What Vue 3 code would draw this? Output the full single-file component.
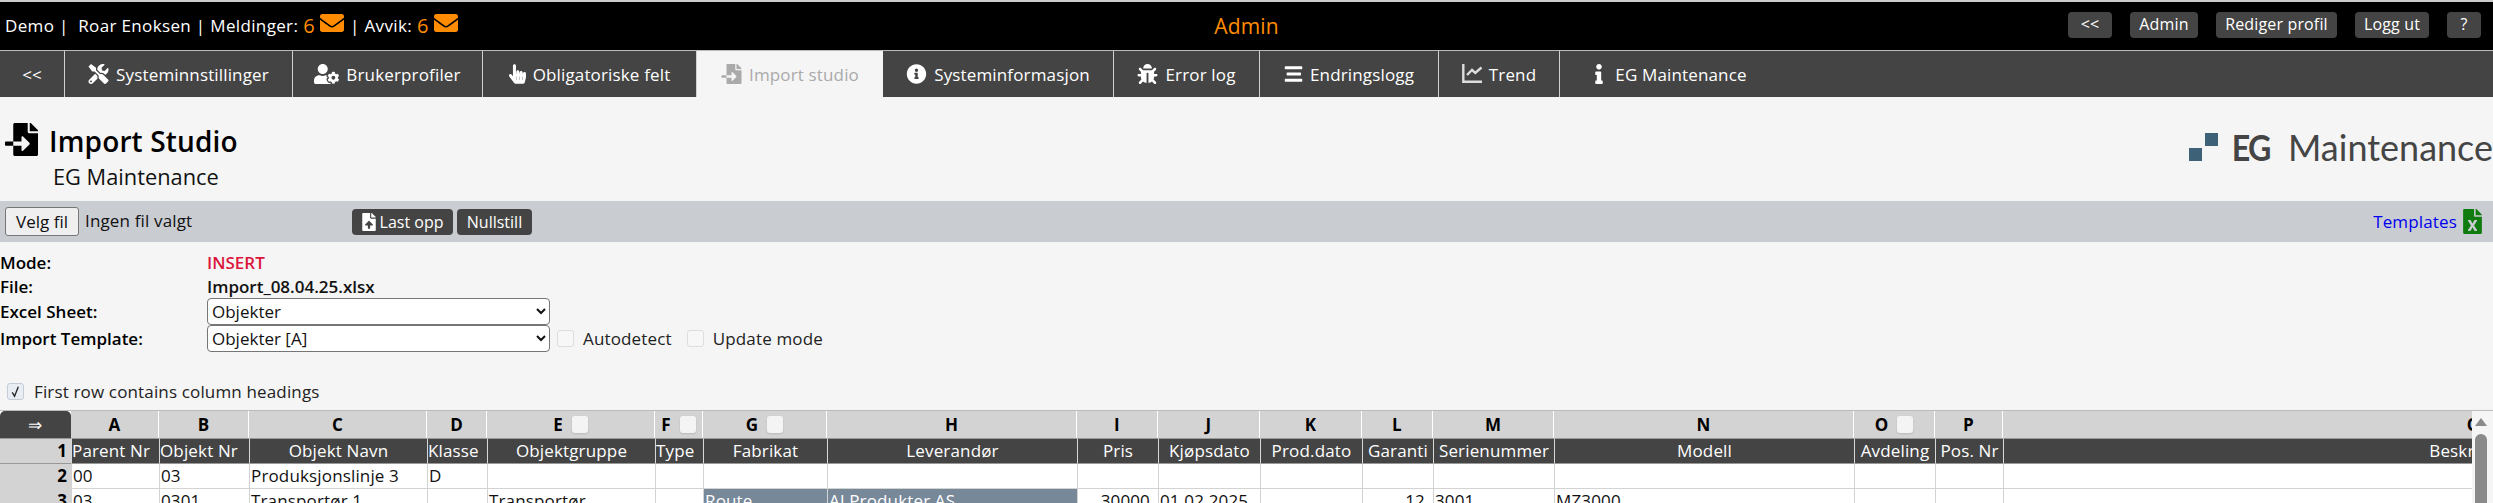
<script setup>
const icons = {
  envelope: { vb: '0 0 512 512', d: 'M502.3 190.8c3.9-3.1 9.7-.2 9.7 4.7V400c0 26.5-21.5 48-48 48H48c-26.5 0-48-21.5-48-48V195.6c0-5 5.7-7.8 9.7-4.7 22.4 17.4 52.1 39.5 154.1 113.6 21.1 15.4 56.7 47.8 92.2 47.6 35.7.3 72-32.8 92.3-47.6 102-74.1 131.6-96.3 154-113.7zM256 320c23.2.4 56.6-29.2 73.4-41.4 132.7-96.3 142.8-104.7 173.4-128.7 5.8-4.5 9.2-11.5 9.2-18.9v-19c0-26.5-21.5-48-48-48H48C21.5 64 0 85.5 0 112v19c0 7.4 3.4 14.3 9.2 18.9 30.6 23.9 40.7 32.4 173.4 128.7 16.8 12.2 50.2 41.8 73.4 41.4z' },
  tools: { vb: '0 0 512 512', d: 'M501.1 395.7L384 278.6c-23.1-23.1-57.6-27.6-85.4-13.9L192 158.1V96L64 0 0 64l96 128h62.1l106.6 106.6c-13.6 27.8-9.2 62.3 13.9 85.4l117.1 117.1c14.6 14.6 38.2 14.6 52.7 0l52.7-52.7c14.5-14.6 14.5-38.2 0-52.7zM331.7 225c28.3 0 54.9 11 74.9 31l19.4 19.4c15.8-6.9 30.8-16.5 43.8-29.5 37.1-37.1 49.7-89.3 37.9-136.7-2.2-9-13.5-12.1-20.1-5.5l-74.4 74.4-67.9-11.3L334 98.9l74.4-74.4c6.6-6.6 3.4-17.9-5.7-20.2-47.4-11.7-99.6.9-136.6 37.9-28.5 28.5-41.9 66.1-41.2 103.6l82.1 82.1c8.1-1.9 16.5-2.9 24.7-2.9zm-103.9 82l-56.7-56.7L18.7 402.8c-25 25-25 65.5 0 90.5s65.5 25 90.5 0l123.6-123.6c-7.6-19.9-9.9-41.6-5-62.7zM64 472c-13.2 0-24-10.8-24-24 0-13.3 10.7-24 24-24s24 10.7 24 24c0 13.2-10.7 24-24 24z' },
  usercog: { vb: '0 0 640 512', d: 'M610.5 373.3c2.6-14.1 2.6-28.5 0-42.6l25.8-14.9c3-1.7 4.3-5.2 3.3-8.5-6.7-21.6-18.2-41.2-33.2-57.4-2.3-2.5-6-3.1-9-1.4l-25.8 14.9c-10.9-9.3-23.4-16.5-36.9-21.3v-29.8c0-3.4-2.4-6.4-5.7-7.1-22.3-5-45-4.8-66.2 0-3.3.7-5.7 3.7-5.7 7.1v29.8c-13.5 4.8-26 12-36.9 21.3l-25.8-14.9c-2.9-1.7-6.7-1.1-9 1.4-15 16.2-26.5 35.8-33.2 57.4-1 3.3.4 6.8 3.3 8.5l25.8 14.9c-2.6 14.1-2.6 28.5 0 42.6l-25.8 14.9c-3 1.7-4.3 5.2-3.3 8.5 6.7 21.6 18.2 41.1 33.2 57.4 2.3 2.5 6 3.1 9 1.4l25.8-14.9c10.9 9.3 23.4 16.5 36.9 21.3v29.8c0 3.4 2.4 6.4 5.7 7.1 22.3 5 45 4.8 66.2 0 3.3-.7 5.7-3.7 5.7-7.1v-29.8c13.5-4.8 26-12 36.9-21.3l25.8 14.9c2.9 1.7 6.7 1.1 9-1.4 15-16.2 26.5-35.8 33.2-57.4 1-3.3-.4-6.8-3.3-8.5l-25.8-14.9zM496 400.5c-26.8 0-48.5-21.8-48.5-48.5s21.8-48.5 48.5-48.5 48.5 21.8 48.5 48.5-21.7 48.5-48.5 48.5zM224 256c70.7 0 128-57.3 128-128S294.7 0 224 0 96 57.3 96 128s57.3 128 128 128zm201.2 226.5c-2.3-1.2-4.6-2.6-6.8-3.9l-7.9 4.6c-6 3.4-12.8 5.3-19.6 5.3-10.9 0-21.4-4.6-28.9-12.6-18.3-19.8-32.3-43.9-40.2-69.6-5.5-17.7 1.9-36.4 17.9-45.7l7.9-4.6c-.1-2.6-.1-5.2 0-7.8l-7.9-4.6c-16-9.2-23.4-28-17.9-45.7.9-2.9 2.2-5.8 3.2-8.7-3.8-.3-7.5-1.2-11.4-1.2h-16.7c-22.2 10.2-46.9 16-72.9 16s-50.6-5.8-72.9-16h-16.7C60.2 288 0 348.2 0 422.4V464c0 26.5 21.5 48 48 48h352c10.1 0 19.5-3.2 27.2-8.5-1.2-3.8-2-7.7-2-11.8v-9.2z' },
  hand: { vb: '0 0 448 512', d: 'M448 240v96c0 3.084-.356 6.159-1.063 9.162l-32 136C410.686 499.23 394.562 512 376 512H168a40.004 40.004 0 0 1-32.35-16.473l-127.997-176c-12.993-17.866-9.043-42.883 8.822-55.876 17.867-12.994 42.884-9.043 55.877 8.823L104 315.992V40c0-22.091 17.908-40 40-40s40 17.909 40 40v200h8v-40c0-22.091 17.908-40 40-40s40 17.909 40 40v40h8v-24c0-22.091 17.908-40 40-40s40 17.909 40 40v24h8c0-22.091 17.908-40 40-40s40 17.909 40 40zm-256 80h-8v96h8v-96zm88 0h-8v96h8v-96zm88 0h-8v96h8v-96z' },
  fileimport: { vb: '0 0 512 512', d: 'M16 288c-8.8 0-16 7.2-16 16v32c0 8.8 7.2 16 16 16h112v-64zm489-183L407.1 7c-4.5-4.5-10.6-7-17-7H384v128h128v-6.1c0-6.3-2.5-12.4-7-16.9zm-153 31V0H152c-13.3 0-24 10.7-24 24v264h128v-65.2c0-14.3 17.3-21.4 27.4-11.3L379 308c6.6 6.7 6.6 17.4 0 24l-95.7 96.4c-10.1 10.1-27.4 3-27.4-11.3V352H128v136c0 13.3 10.7 24 24 24h336c13.3 0 24-10.7 24-24V160H376c-13.2 0-24-10.8-24-24z' },
  infocircle: { vb: '0 0 512 512', d: 'M256 8C119.043 8 8 119.083 8 256c0 136.997 111.043 248 248 248s248-111.003 248-248C504 119.083 392.957 8 256 8zm0 110c23.196 0 42 18.804 42 42s-18.804 42-42 42-42-18.804-42-42 18.804-42 42-42zm56 254c0 6.627-5.373 12-12 12h-88c-6.627 0-12-5.373-12-12v-24c0-6.627 5.373-12 12-12h12v-64h-12c-6.627 0-12-5.373-12-12v-24c0-6.627 5.373-12 12-12h64c6.627 0 12 5.373 12 12v100h12c6.627 0 12 5.373 12 12v24z' },
  bug: { vb: '0 0 512 512', d: 'M511.988 288.9c-.478 17.43-15.217 31.1-32.653 31.1H424v16c0 21.864-4.882 42.584-13.6 61.145l60.228 60.228c12.496 12.497 12.496 32.758 0 45.255-12.498 12.497-32.759 12.496-45.256 0l-54.736-54.736C345.886 467.965 314.351 480 280 480V236c0-6.627-5.373-12-12-12h-24c-6.627 0-12 5.373-12 12v244c-34.351 0-65.886-12.035-90.636-32.108l-54.736 54.736c-12.498 12.497-32.759 12.496-45.256 0-12.496-12.497-12.496-32.758 0-45.255l60.228-60.228C92.882 378.584 88 357.864 88 336v-16H32.666C15.23 320 .491 306.33.013 288.9-.484 270.816 14.028 256 32 256h56v-58.745l-46.628-46.628c-12.496-12.497-12.496-32.758 0-45.255 12.498-12.497 32.758-12.497 45.256 0L141.255 160h229.489l54.627-54.627c12.498-12.497 32.758-12.497 45.256 0 12.496 12.497 12.496 32.758 0 45.255L424 197.255V256h56c17.972 0 32.484 14.816 31.988 32.9zM257 0c-61.856 0-112 50.144-112 112h224C369 50.144 318.856 0 257 0z' },
  bars: { vb: '0 0 448 512', d: 'M16 132h416c8.837 0 16-7.163 16-16V76c0-8.837-7.163-16-16-16H16C7.163 60 0 67.163 0 76v40c0 8.837 7.163 16 16 16zm48 160h336c8.837 0 16-7.163 16-16v-40c0-8.837-7.163-16-16-16H64c-8.837 0-16 7.163-16 16v40c0 8.837 7.163 16 16 16zm-48 160h416c8.837 0 16-7.163 16-16v-40c0-8.837-7.163-16-16-16H16c-8.837 0-16 7.163-16 16v40c0 8.837 7.163 16 16 16z' },
  info: { vb: '0 0 192 512', d: 'M20 424.229h20V279.771H20c-11.046 0-20-8.954-20-20V212c0-11.046 8.954-20 20-20h112c11.046 0 20 8.954 20 20v212.229h20c11.046 0 20 8.954 20 20V492c0 11.046-8.954 20-20 20H20c-11.046 0-20-8.954-20-20v-47.771c0-11.046 8.954-20 20-20zM96 0C56.235 0 24 32.235 24 72s32.235 72 72 72 72-32.235 72-72S135.764 0 96 0z' },
  upload: { vb: '0 0 384 512', d: 'M224 136V0H24C10.7 0 0 10.7 0 24v464c0 13.3 10.7 24 24 24h336c13.3 0 24-10.7 24-24V160H248c-13.2 0-24-10.8-24-24zm65.18 216.01H224v80c0 8.84-7.16 16-16 16h-32c-8.84 0-16-7.16-16-16v-80H94.82c-14.28 0-21.41-17.29-11.27-27.36l96.42-95.7c6.65-6.61 17.39-6.61 24.04 0l96.42 95.7c10.15 10.07 3.03 27.36-11.25 27.36zM377 105L279.1 7c-4.5-4.5-10.6-7-17-7H256v128h128v-6.1c0-6.3-2.5-12.4-7-16.9z' },
  excel: { vb: '0 0 384 512', d: 'M224 136V0H24C10.7 0 0 10.7 0 24v464c0 13.3 10.7 24 24 24h336c13.3 0 24-10.7 24-24V160H248c-13.2 0-24-10.8-24-24zm60.1 106.5L224 336l60.1 93.5c5.1 8-.6 18.5-10.1 18.5h-34.9c-4.4 0-8.5-2.4-10.6-6.3C208.9 405.5 192 373 192 373c-6.1 14.1-9.5 19.1-36.6 68.8-2.1 3.9-6.1 6.3-10.5 6.3H110c-9.5 0-15.2-10.5-10.1-18.5l60.3-93.5-60.3-93.5c-5.2-8 .6-18.5 10.1-18.5h34.8c4.4 0 8.5 2.4 10.6 6.3 26.1 48.8 20 33.6 36.6 68.5 0 0 6.1-11.7 36.6-68.5 2.1-3.9 6.2-6.3 10.6-6.3H274c9.5-.1 15.2 10.4 10.1 18.4zM384 121.9v6.1H256V0h6.1c6.4 0 12.5 2.5 17 7l97.9 98c4.5 4.5 7 10.6 7 16.9z' }
}

const topButtons = [
  { label: '<<', w: 44 },
  { label: 'Admin', w: 68 },
  { label: 'Rediger profil', w: 121 },
  { label: 'Logg ut', w: 74 },
  { label: '?', w: 34 }
]

const tabs = [
  { label: 'Systeminnstillinger', icon: 'tools', w: 228, iw: 21 },
  { label: 'Brukerprofiler', icon: 'usercog', w: 190, iw: 25 },
  { label: 'Obligatoriske felt', icon: 'hand', w: 214, iw: 17 },
  { label: 'Import studio', icon: 'fileimport', w: 186, iw: 21, active: true },
  { label: 'Systeminformasjon', icon: 'infocircle', w: 231, iw: 21 },
  { label: 'Error log', icon: 'bug', w: 146, iw: 21 },
  { label: 'Endringslogg', icon: 'bars', w: 179, iw: 19 },
  { label: 'Trend', icon: 'chart', w: 121, iw: 20 },
  { label: 'EG Maintenance', icon: 'info', w: 222, iw: 8, wide: true }
]

const columns = [
  { letter: 'A', w: 88, head: 'Parent Nr' },
  { letter: 'B', w: 90, head: 'Objekt Nr' },
  { letter: 'C', w: 178, head: 'Objekt Navn', center: true },
  { letter: 'D', w: 60, head: 'Klasse' },
  { letter: 'E', w: 168, head: 'Objektgruppe', center: true, box: true },
  { letter: 'F', w: 48, head: 'Type', box: true },
  { letter: 'G', w: 124, head: 'Fabrikat', center: true, box: true },
  { letter: 'H', w: 250, head: 'Leverandør', center: true },
  { letter: 'I', w: 81, head: 'Pris', center: true, right: true },
  { letter: 'J', w: 102, head: 'Kjøpsdato', center: true },
  { letter: 'K', w: 102, head: 'Prod.dato', center: true },
  { letter: 'L', w: 71, head: 'Garanti', center: true, right: true },
  { letter: 'M', w: 121, head: 'Serienummer', center: true },
  { letter: 'N', w: 300, head: 'Modell', center: true },
  { letter: 'O', w: 81, head: 'Avdeling', center: true, box: true },
  { letter: 'P', w: 68, head: 'Pos. Nr', center: true },
  { letter: 'Q', w: 942, head: 'Beskrivelse', center: true }
]

const rows = [
  { n: 2, cells: ['00', '03', 'Produksjonslinje 3', 'D', '', '', '', '', '', '', '', '', '', '', '', '', ''] },
  { n: 3, cells: ['03', '0301', 'Transportør 1', '', 'Transportør', '', 'Route', 'AJ Produkter AS', '30000', '01.02.2025', '', '12', '3001', 'MZ3000', '', '', ''] }
]
</script>

<template>
  <div class="page">
    <header class="topbar">
      <div class="who">
        <span>Demo |&nbsp; Roar Enoksen | Meldinger:</span>
        <span class="count">6</span>
        <svg class="env" :viewBox="icons.envelope.vb"><path :d="icons.envelope.d" /></svg>
        <span>| Avvik:</span>
        <span class="count">6</span>
        <svg class="env" :viewBox="icons.envelope.vb"><path :d="icons.envelope.d" /></svg>
      </div>
      <div class="area">Admin</div>
      <div class="topbtns">
        <a v-for="b in topButtons" :key="b.label" class="topbtn" :style="{ width: b.w + 'px' }">{{ b.label }}</a>
      </div>
    </header>

    <nav class="tabs">
      <a class="tab back">&lt;&lt;</a>
      <a v-for="t in tabs" :key="t.label" class="tab" :class="{ active: t.active }" :style="{ width: t.w + 'px' }">
        <svg v-if="t.icon === 'chart'" class="ticon chart" :style="{ width: t.iw + 'px' }" viewBox="0 0 20 20">
          <path d="M1.3 0v17.7h18.7" stroke-width="2.4" />
          <path d="M5 11l5-5 3.3 3 6.2-5.5" stroke-width="2.4" />
        </svg>
        <svg v-else class="ticon" :style="{ width: t.iw + 'px' }" :viewBox="icons[t.icon].vb"><path :d="icons[t.icon].d" /></svg>
        <span :class="{ widegap: t.wide }">{{ t.label }}</span>
      </a>
    </nav>

    <section class="heading">
      <div class="titles">
        <h1 class="title">
          <svg class="ticon2" :viewBox="icons.fileimport.vb"><path :d="icons.fileimport.d" /></svg>
          <span class="titletext">Import Studio</span>
        </h1>
        <div class="sub">EG Maintenance</div>
      </div>
      <div class="logo">
        <span class="squares"><i class="sq s1"></i><i class="sq s2"></i></span>
        <span class="eg">EG</span>
        <span class="maint">Maintenance</span>
      </div>
    </section>

    <section class="toolbar">
      <button class="choose" type="button">Velg fil</button>
      <span class="nofile">Ingen fil valgt</span>
      <div class="actions">
        <button class="act lastopp" type="button">
          <svg class="upicon" :viewBox="icons.upload.vb"><path :d="icons.upload.d" /></svg>Last opp
        </button>
        <button class="act nullstill" type="button">Nullstill</button>
      </div>
      <a class="templates">Templates
        <svg class="xl" :viewBox="icons.excel.vb"><path :d="icons.excel.d" /></svg>
      </a>
    </section>

    <section class="form">
      <div class="frow r1"><label>Mode:</label><strong class="insert">INSERT</strong></div>
      <div class="frow r2"><label>File:</label><strong>Import_08.04.25.xlsx</strong></div>
      <div class="frow r3"><label>Excel Sheet:</label><select><option>Objekter</option></select></div>
      <div class="frow r4">
        <label>Import Template:</label><select><option>Objekter [A]</option></select>
        <span class="box formbox b1"></span><span class="cbtext">Autodetect</span>
        <span class="box formbox b2"></span><span class="cbtext">Update mode</span>
      </div>
    </section>

    <div class="firstrow">
      <span class="box formbox checked">
        <svg viewBox="0 0 16 16" fill="none" stroke="#222" stroke-width="1.4"><path d="M4.5 9l2.5 4 4-10" /></svg>
      </span>
      <span>First row contains column headings</span>
    </div>

    <div class="sheet">
      <div class="tablewrap">
        <table>
          <colgroup>
            <col style="width: 71px" />
            <col v-for="c in columns" :key="c.letter" :style="{ width: c.w + 'px' }" />
          </colgroup>
          <tbody>
            <tr class="letters">
              <td class="corner">⇒</td>
              <td v-for="c in columns" :key="c.letter">
                <span>{{ c.letter }}</span><span v-if="c.box" class="box letterbox"></span>
              </td>
            </tr>
            <tr class="heads">
              <td class="num">1</td>
              <td v-for="c in columns" :key="c.letter" :class="{ mid: c.center }">{{ c.head }}</td>
            </tr>
            <tr v-for="r in rows" :key="r.n" class="data">
              <td class="num">{{ r.n }}</td>
              <td
                v-for="(v, i) in r.cells"
                :key="i"
                :class="{ hl: r.n === 3 && (i === 6 || i === 7), right: columns[i].right }"
              >{{ v }}</td>
            </tr>
          </tbody>
        </table>
      </div>
      <div class="scroll">
        <i class="arrow"></i>
        <i class="thumb"></i>
      </div>
    </div>
  </div>
</template>

<style>
html, body { margin: 0; overflow: hidden; background: #f5f5f5; }
</style>

<style scoped>
.page {
  width: 2493px;
  height: 503px;
  overflow: hidden;
  background: #f5f5f5;
  font-family: "Open Sans", "Liberation Sans", sans-serif;
  font-size: 17px;
  letter-spacing: 0.15px;
  color: #111;
}
.topbar {
  height: 48px;
  border-top: 2px solid #ccc;
  border-bottom: 1px solid #bbb;
  background: #000;
  color: #fff;
  display: grid;
  grid-template-columns: 1fr auto 1fr;
  align-items: center;
}
.who { display: flex; align-items: center; padding-left: 5px; gap: 5px; white-space: nowrap; margin-top: -1px; letter-spacing: 0.35px; }
.count { color: #ff8c00; font-size: 20px; }
.env { width: 24px; height: 24px; fill: #ff8c00; margin-top: -5px; margin-right: 1px; }
.area { color: #ff8c00; font-size: 21px; margin-top: -1px; }
.topbtns { display: flex; justify-content: flex-end; gap: 18px; padding-right: 12px; margin-top: -2px; }
.topbtn {
  height: 26px;
  line-height: 25px;
  text-align: center;
  background: #444;
  border-radius: 4px;
  color: #fff;
  font-size: 16px;
}
.tabs { height: 46px; background: #444; display: flex; color: #fff; }
.tab {
  display: flex;
  align-items: center;
  justify-content: center;
  gap: 7px;
  height: 100%;
  box-sizing: border-box;
  border-right: 1px solid #d0d0d0;
  white-space: nowrap;
}
.tab.back { width: 65px; }
.tab.active { background: #f5f5f5; color: #aaa; border-right: 0; }
.tab:last-child { border-right: 0; }
.ticon { height: 20px; fill: currentColor; flex: none; }
.ticon.chart { fill: none; stroke: #ddd; }
.widegap { margin-left: 5px; }
.heading { height: 104px; display: flex; justify-content: space-between; box-sizing: border-box; }
.titles { padding: 26px 0 0 5px; }
.title { margin: 0; display: flex; align-items: flex-start; gap: 11px; font-size: 28px; font-weight: 600; line-height: 33px; color: #000; }
.titletext { margin-top: 2px; }
.ticon2 { width: 33px; height: 33px; fill: #000; }
.sub { margin: 5px 0 0 48px; font-size: 21.8px; letter-spacing: 0; line-height: 28px; color: #111; }
.logo { display: flex; align-items: center; height: 28px; margin-top: 36px; color: #454545; letter-spacing: 0; }
.squares { position: relative; width: 29px; height: 28px; margin-right: 8px; }
.sq { position: absolute; width: 13px; height: 13px; background: #3d6277; }
.s1 { left: 0; bottom: 0; }
.s2 { right: 0; top: 0; }
.eg {
  display: inline-block;
  font-family: "Lato", sans-serif;
  font-weight: 700;
  font-size: 37px;
  letter-spacing: -2px;
  line-height: 28px;
  margin-right: 18px;
  transform: scaleX(0.87);
  transform-origin: right center;
}
.maint { font-family: "Lato", sans-serif; font-weight: 400; font-size: 36px; line-height: 28px; }
.toolbar { height: 41px; background: #c9ccd1; display: flex; align-items: center; padding: 0 0 0 5px; box-sizing: border-box; }
.choose {
  width: 74px;
  height: 29px;
  padding: 0;
  background: #efefef;
  border: 1px solid #767676;
  border-radius: 3px;
  font: inherit;
  color: #111;
}
.nofile { margin-left: 6px; width: 261px; margin-top: -3px; }
.actions { display: flex; gap: 4px; margin-left: 6px; }
.act {
  height: 26px;
  padding: 0;
  display: flex;
  align-items: center;
  justify-content: center;
  gap: 4px;
  background: #444;
  border: 0;
  border-radius: 4px;
  color: #fff;
  font: inherit;
  font-size: 16px;
}
.lastopp { width: 101px; }
.nullstill { width: 75px; }
.upicon { width: 14px; height: 18px; fill: #fff; }
.templates { margin-left: auto; display: flex; align-items: center; gap: 6px; padding-right: 11px; color: #0000ee; }
.xl { width: 19px; height: 25px; fill: #107c10; }
.form { padding-top: 8px; }
.frow { display: flex; align-items: center; }
.r1 { height: 25px; }
.r2 { height: 22px; }
.r3 { height: 28px; }
.r4 { height: 27px; }
.frow label { width: 207px; font-weight: 600; color: #000; letter-spacing: 0; }
.frow strong { font-weight: 600; color: #111; letter-spacing: 0; }
.frow .insert { color: #dc143c; }
select {
  width: 343px;
  height: 27px;
  background: #fff;
  border: 1px solid #767676;
  border-radius: 4px;
  font: inherit;
  color: #111;
}
.box { display: inline-block; box-sizing: border-box; flex: none; }
.formbox { width: 17px; height: 17px; border: 1px solid #ddd; border-radius: 3px; background: #f7f7f7; }
.b1 { margin-left: 7px; }
.b2 { margin-left: 15px; }
.cbtext { margin-left: 9px; color: #222; }
.firstrow { display: flex; align-items: center; gap: 10px; height: 18px; margin-top: 30px; padding-left: 7px; color: #222; }
.checked { background: #e8edf3; border-color: #c4ccd6; }
.checked svg { display: block; width: 15px; height: 15px; }
.sheet { display: flex; margin-top: 10px; border-top: 1px solid #bbb; height: 93px; }
.tablewrap { width: 2472px; overflow: hidden; }
table { table-layout: fixed; width: 2945px; border-collapse: separate; border-spacing: 0; background: #fff; }
td { padding: 0 0 0 2px; overflow: hidden; white-space: nowrap; box-sizing: border-box; line-height: 22px; }
.letters td {
  height: 27px;
  background: #d3d3d3;
  border-right: 1px solid #fff;
  text-align: center;
  font-weight: 700;
  color: #000;
  padding: 0;
}
.letters .corner {
  background: #444;
  color: #fff;
  font-weight: 400;
  border-radius: 5px 5px 0 0;
  border-right: 0;
}
.letterbox {
  width: 16px;
  height: 17px;
  margin-left: 9px;
  vertical-align: -2px;
  background: #f4f4f4;
  border-radius: 3px;
  box-shadow: 0 1px 2px rgba(0, 0, 0, 0.12);
}
.heads td {
  height: 26px;
  background: #444;
  color: #fff;
  border-left: 1px solid #d8d8d8;
  border-top: 1px solid #999;
  border-bottom: 1px solid #999;
  padding-left: 0;
}
.heads .mid { text-align: center; }
.data td {
  height: 25px;
  border-left: 1px solid #d3d3d3;
  border-bottom: 1px solid #d3d3d3;
  color: #111;
  padding-left: 1px;
}
.heads td.num,
.data td.num {
  background: #d3d3d3;
  color: #000;
  border-left: 0;
  font-weight: 700;
  text-align: right;
  padding: 0 4px 0 0;
}
.data td.hl { background: #778899; color: #fff; }
.data td.right { text-align: right; padding-right: 8px; }
.scroll { position: relative; width: 21px; background: #f5f5f5; }
.arrow {
  position: absolute;
  left: 3px;
  top: 7px;
  width: 0;
  height: 0;
  border-left: 6.5px solid transparent;
  border-right: 6.5px solid transparent;
  border-bottom: 8px solid #8a8a8a;
}
.thumb { position: absolute; left: 3px; top: 23px; width: 12px; height: 80px; background: #8a8a8a; border-radius: 6px; }
</style>
